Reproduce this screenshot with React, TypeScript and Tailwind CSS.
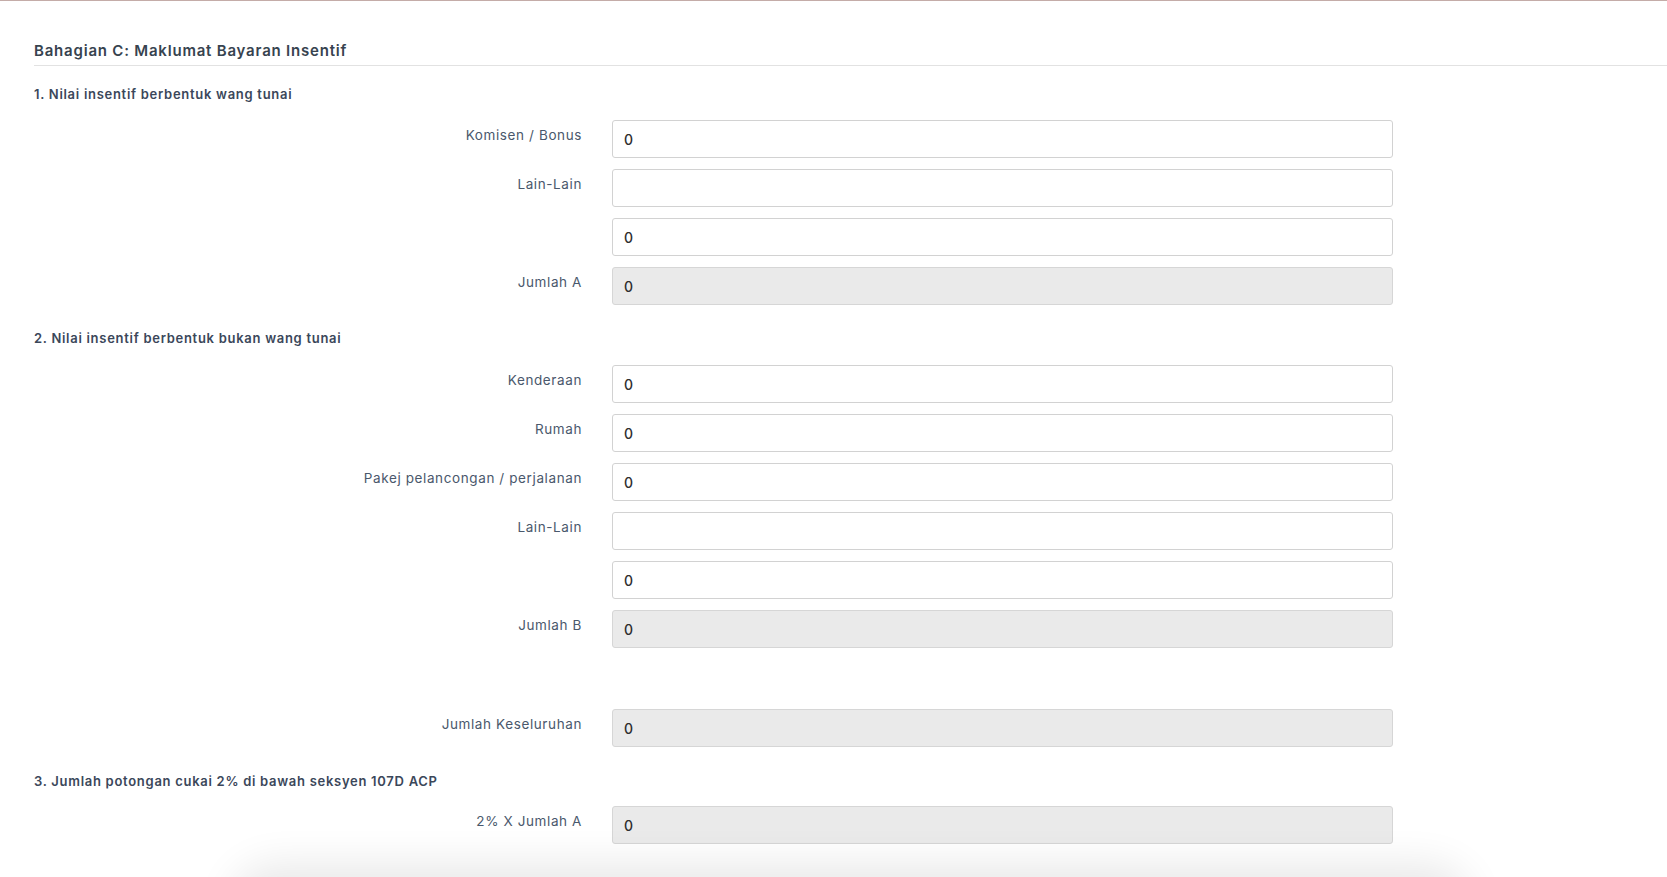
import React from 'react'

type Field = {
  label: string
  value: string
  disabled?: boolean
}

const FONT = { fontFamily: 'Inter, "Noto Sans", sans-serif' }

const CASH: Field[] = [
  { label: 'Komisen / Bonus', value: '0' },
  { label: 'Lain-Lain', value: '' },
  { label: '', value: '0' },
  { label: 'Jumlah A', value: '0', disabled: true },
]

const NON_CASH: Field[] = [
  { label: 'Kenderaan', value: '0' },
  { label: 'Rumah', value: '0' },
  { label: 'Pakej pelancongan / perjalanan', value: '0' },
  { label: 'Lain-Lain', value: '' },
  { label: '', value: '0' },
  { label: 'Jumlah B', value: '0', disabled: true },
]

function FormRow({ label, value, disabled }: Field) {
  return (
    <div className="flex items-start gap-[30px] mb-[11px]">
      <label className="w-[548px] shrink-0 text-right pt-[6px] text-[13.5px] leading-[18px] tracking-[0.045em] text-[#4a586c]">
        {label}
      </label>
      <input
        readOnly
        value={value}
        className={
          disabled
            ? 'w-[781px] h-[38px] px-[11px] rounded-[3px] border border-[#d6d6d6] bg-[#eaeaea] text-[14px] font-medium tracking-[0.03em] text-[#2e2e2e] outline-none'
            : 'w-[781px] h-[38px] px-[11px] rounded-[3px] border border-[#d2d2d2] bg-white text-[14px] font-medium tracking-[0.03em] text-[#2e2e2e] outline-none'
        }
        style={FONT}
      />
    </div>
  )
}

function SectionTitle({ children, className }: { children: React.ReactNode; className?: string }) {
  return (
    <div className={`text-[13px] leading-[18px] font-semibold tracking-[0.055em] text-[#3b475a] ${className ?? ''}`}>
      {children}
    </div>
  )
}

export default function App() {
  return (
    <div className="relative h-[877px] overflow-hidden bg-white border-t border-[#c4aca8]" style={FONT}>
      <div className="pl-[34px]">
        {/* Section header */}
        <div className="pt-[40px] pb-[4px] border-b border-[#e2e2e2]">
          <h2 className="text-[15px] leading-[20px] font-semibold tracking-[0.053em] text-[#37434f]">
            Bahagian C: Maklumat Bayaran Insentif
          </h2>
        </div>

        <SectionTitle className="mt-[19px] mb-[17px]">1. Nilai insentif berbentuk wang tunai</SectionTitle>
        {CASH.map((f, i) => (
          <FormRow key={i} {...f} />
        ))}

        <SectionTitle className="mt-[24px] mb-[18px]">2. Nilai insentif berbentuk bukan wang tunai</SectionTitle>
        {NON_CASH.map((f, i) => (
          <FormRow key={i} {...f} />
        ))}

        <div className="mt-[61px]">
          <FormRow label="Jumlah Keseluruhan" value="0" disabled />
        </div>

        <SectionTitle className="mt-[25px] mb-[16px]">3. Jumlah potongan cukai 2% di bawah seksyen 107D ACP</SectionTitle>
        <FormRow label="2% X Jumlah A" value="0" disabled />
      </div>

      {/* shadow of the floating bar sitting just below the fold */}
      <div className="absolute left-[245px] right-[210px] top-[877px] h-[60px] rounded-[40px] bg-white shadow-[0_0_40px_14px_rgba(0,0,0,0.09)]" />
    </div>
  )
}
